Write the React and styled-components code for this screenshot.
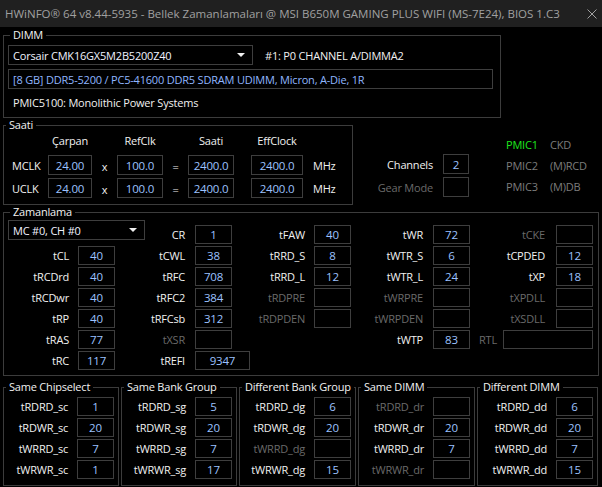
import React from 'react';
import styled, { createGlobalStyle } from 'styled-components';

const FONT = '"Open Sans", "Noto Sans", sans-serif';
const SIZE = '11px';
const TRACK = '-0.2px';

const GlobalStyle = createGlobalStyle`
  html, body {
    margin: 0;
    padding: 0;
    background: #000000;
  }
  body {
    font-family: ${FONT};
    font-size: ${SIZE};
    letter-spacing: ${TRACK};
    color: #eeeeee;
  }
`;

const Window = styled.div`
  width: 602px;
  height: 487px;
  overflow: hidden;
  background: #000000;
`;

const TitleBar = styled.div`
  display: flex;
  align-items: center;
  justify-content: space-between;
  height: 27px;
  padding: 0 5px;
  background: #202020;
  color: #a0a0a0;
  font-size: 11.5px;
  letter-spacing: 0;
  box-sizing: border-box;
`;

const Close = styled.svg`
  width: 10px;
  height: 10px;
`;

const Body = styled.div`
  display: flex;
  flex-direction: column;
  padding: 1px 4px 0 3px;
`;

const Group = styled.fieldset`
  margin: 0;
  padding: ${({ pad }) => pad || '2px 4px 4px 4px'};
  width: ${({ w }) => w}px;
  min-width: 0;
  box-sizing: border-box;
  border: 1px solid #3c3c3c;
  flex: none;
`;

const Legend = styled.legend`
  padding: 0 3px;
  margin-left: 2px;
  font-size: 11px;
  letter-spacing: -0.2px;
  line-height: 14px;
  color: #f2f2f2;
  white-space: nowrap;
`;

const Box = styled.div`
  width: ${({ w }) => w || 37}px;
  height: ${({ h }) => h || 19}px;
  box-sizing: border-box;
  border: 1px solid #3e3e3e;
  display: flex;
  align-items: center;
  justify-content: center;
  color: #9cc2ff;
  font-size: 11.5px;
  justify-self: start;
  align-self: end;
`;

const Combo = styled.div`
  display: flex;
  align-items: center;
  justify-content: space-between;
  width: ${({ w }) => w}px;
  height: 20px;
  box-sizing: border-box;
  border: 1px solid #3e3e3e;
  padding: 0 7px 0 4px;
  color: #f0f2ff;
  align-self: start;
  justify-self: start;
  grid-column: ${({ span }) => span || 'auto'};
`;

const Arrow = styled.span`
  width: 0;
  height: 0;
  border-left: 4px solid transparent;
  border-right: 4px solid transparent;
  border-top: 4px solid #f0f0f0;
`;

const Label = styled.div`
  text-align: right;
  padding-right: ${({ pr }) => (pr == null ? 9 : pr)}px;
  color: ${({ off }) => (off ? '#6a6a6a' : '#f0f0f0')};
  align-self: end;
  line-height: 19px;
  white-space: nowrap;
`;

/* DIMM */
const DimmRow = styled.div`
  display: flex;
  align-items: center;
  gap: 12px;
`;

const Slot = styled.span`
  color: #f0f0f0;
`;

const InfoBox = styled.div`
  margin-top: 4px;
  width: 485px;
  height: 20px;
  box-sizing: border-box;
  border: 1px solid #3e3e3e;
  padding-left: 4px;
  display: flex;
  align-items: center;
  color: #8fb6ff;
`;

const PlainLine = styled.div`
  height: 22px;
  margin-top: 2px;
  padding-left: 5px;
  display: flex;
  align-items: center;
  color: #f0f0f0;
`;

/* Saati */
const ClockRow = styled.div`
  display: flex;
  align-items: flex-start;
`;

const ClockGrid = styled.div`
  display: grid;
  grid-template-columns: 36px 44px 25px 46px 25px 46px 17px 52px auto;
  grid-template-rows: 20px 20px 20px;
  row-gap: 3px;
  padding-left: 8px;
  align-items: center;
  & > :nth-child(-n + 9) {
    margin-top: -3px;
  }
`;

const Head = styled.div`
  text-align: center;
  color: #f0f0f0;
`;

const RowName = styled.div`
  color: #f0f0f0;
`;

const Op = styled.div`
  text-align: center;
  color: #f0f0f0;
  padding-top: 3px;
`;

const Unit = styled.div`
  padding-left: 10px;
  color: #f0f0f0;
`;

const ChannelGrid = styled.div`
  display: grid;
  grid-template-columns: 90px 26px;
  grid-template-rows: 20px 20px;
  row-gap: 3px;
  margin-top: 36px;
  & > div {
    align-self: center;
  }
`;

const ChLabel = styled.div`
  text-align: right;
  padding-right: 10px;
  color: ${({ off }) => (off ? '#6a6a6a' : '#f0f0f0')};
`;

const ChBox = styled(Box)`
  width: 26px;
  height: 20px;
  align-self: center;
`;

const PmicGrid = styled.div`
  display: grid;
  grid-template-columns: 44px auto;
  grid-auto-rows: 21px;
  align-items: center;
  margin: 16px 0 0 37px;
`;

const Pmic = styled.div`
  color: ${({ on }) => (on ? '#1ee61e' : '#7c7c7c')};
`;

/* Zamanlama */
const TimingGrid = styled.div`
  display: grid;
  grid-template-columns: 70px 37px 80px 37px 82px 37px 82px 37px 86px 37px;
  grid-template-rows: 24px repeat(6, 19px);
  row-gap: 2px;
`;

const RtlCell = styled.div`
  grid-column: 9 / span 2;
  display: flex;
  align-items: flex-end;
  justify-content: space-between;
  padding-left: 9px;
`;

const RtlLabel = styled.span`
  color: #6a6a6a;
  line-height: 19px;
`;

/* Bottom */
const BottomRow = styled.div`
  display: flex;
  gap: 2px;
  margin-top: 4px;
`;

const PairGrid = styled.div`
  display: grid;
  grid-template-columns: 1fr 37px;
  grid-auto-rows: 19px;
  row-gap: 2px;
  padding-right: 2px;
  margin-top: 1px;
`;

const Cell = ({ label, value, off, w, pr }) => (
  <>
    <Label off={off} pr={pr}>{label}</Label>
    <Box w={w}>{value}</Box>
  </>
);

const Empty = () => <div />;

const columns = [
  ['combo', ['tCL', 40], ['tRCDrd', 40], ['tRCDwr', 40], ['tRP', 40], ['tRAS', 77], ['tRC', 117]],
  [['CR', 1], ['tCWL', 38], ['tRFC', 708], ['tRFC2', 384], ['tRFCsb', 312], ['tXSR', '', true], ['tREFI', 9347]],
  [['tFAW', 40], ['tRRD_S', 8], ['tRRD_L', 12], ['tRDPRE', '', true], ['tRDPDEN', '', true], null, 'skip'],
  [['tWR', 72], ['tWTR_S', 6], ['tWTR_L', 24], ['tWRPRE', '', true], ['tWRPDEN', '', true], ['tWTP', 83], null],
  [['tCKE', '', true], ['tCPDED', 12], ['tXP', 18], ['tXPDLL', '', true], ['tXSDLL', '', true], 'rtl', null],
];

const labelPad = [9, 10, 9, 10, 11];

const groups = [
  { title: 'Same Chipselect', w: 116, rows: [['tRDRD_sc', 1], ['tRDWR_sc', 20], ['tWRRD_sc', 7], ['tWRWR_sc', 1]] },
  { title: 'Same Bank Group', w: 116, rows: [['tRDRD_sg', 5], ['tRDWR_sg', 20], ['tWRRD_sg', 7], ['tWRWR_sg', 17]] },
  { title: 'Different Bank Group', w: 117, rows: [['tRDRD_dg', 6], ['tRDWR_dg', 20], ['tWRRD_dg', '', true], ['tWRWR_dg', 15]] },
  { title: 'Same DIMM', w: 117, rows: [['tRDRD_dr', '', true], ['tRDWR_dr', 20], ['tWRRD_dr', 7], ['tWRWR_dr', '', true]] },
  { title: 'Different DIMM', w: 121, rows: [['tRDRD_dd', 6], ['tRDWR_dd', 20], ['tWRRD_dd', 7], ['tWRWR_dd', 15]] },
];

function TimingCells() {
  const cells = [];
  for (let r = 0; r < 7; r += 1) {
    columns.forEach((col, c) => {
      const item = col[r];
      const key = `${r}-${c}`;
      if (item === 'skip') return; // tREFI box runs over this slot
      if (item === 'combo') {
        // combo is wider than its two tracks and runs under the CR label
        cells.push(
          <Combo key={key} w={137} span="1 / span 2">
            MC #0, CH #0
            <Arrow />
          </Combo>,
        );
        return;
      }
      if (item === 'rtl') {
        cells.push(
          <RtlCell key={key}>
            <RtlLabel>RTL</RtlLabel>
            <Box w={90} />
          </RtlCell>,
        );
        return;
      }
      if (!item) {
        cells.push(<React.Fragment key={key}><Empty /><Empty /></React.Fragment>);
        return;
      }
      if (item[0] === 'tREFI') {
        cells.push(
          <React.Fragment key={key}>
            <Label pr={labelPad[c]}>{item[0]}</Label>
            <Box w={55} style={{ gridColumn: '4 / span 2' }}>{item[1]}</Box>
          </React.Fragment>,
        );
        return;
      }
      cells.push(
        <Cell key={key} label={item[0]} value={item[1]} off={item[2]} pr={labelPad[c]} />,
      );
    });
  }
  return cells;
}

export default function App() {
  return (
    <Window>
      <GlobalStyle />
      <TitleBar>
        <span>HWiNFO® 64 v8.44-5935 - Bellek Zamanlamaları @ MSI B650M GAMING PLUS WIFI (MS-7E24), BIOS 1.C3</span>
        <Close viewBox="0 0 10 10">
          <path d="M0.5 0.5 L9.5 9.5 M9.5 0.5 L0.5 9.5" stroke="#a0a0a0" strokeWidth="1" />
        </Close>
      </TitleBar>
      <Body>
        <Group w={498} pad="3px 4px 4px 4px">
          <Legend>DIMM</Legend>
          <DimmRow>
            <Combo w={245}>
              Corsair CMK16GX5M2B5200Z40
              <Arrow />
            </Combo>
            <Slot>#1: P0 CHANNEL A/DIMMA2</Slot>
          </DimmRow>
          <InfoBox>[8 GB] DDR5-5200 / PC5-41600 DDR5 SDRAM UDIMM, Micron, A-Die, 1R</InfoBox>
          <PlainLine>PMIC5100: Monolithic Power Systems</PlainLine>
        </Group>

        <ClockRow>
          <Group w={350} pad="0 4px 6px 0">
            <Legend>Saati</Legend>
            <ClockGrid>
              <div />
              <Head>Çarpan</Head>
              <div />
              <Head>RefClk</Head>
              <div />
              <Head>Saati</Head>
              <div />
              <Head>EffClock</Head>
              <div />

              <RowName>MCLK</RowName>
              <Box w={44} h={20}>24.00</Box>
              <Op>x</Op>
              <Box w={46} h={20}>100.0</Box>
              <Op>=</Op>
              <Box w={46} h={20}>2400.0</Box>
              <div />
              <Box w={52} h={20}>2400.0</Box>
              <Unit>MHz</Unit>

              <RowName>UCLK</RowName>
              <Box w={44} h={20}>24.00</Box>
              <Op>x</Op>
              <Box w={46} h={20}>100.0</Box>
              <Op>=</Op>
              <Box w={46} h={20}>2400.0</Box>
              <div />
              <Box w={52} h={20}>2400.0</Box>
              <Unit>MHz</Unit>
            </ClockGrid>
          </Group>
          <ChannelGrid>
            <ChLabel>Channels</ChLabel>
            <ChBox>2</ChBox>
            <ChLabel off>Gear Mode</ChLabel>
            <ChBox />
          </ChannelGrid>
          <PmicGrid>
            <Pmic on>PMIC1</Pmic>
            <Pmic>CKD</Pmic>
            <Pmic>PMIC2</Pmic>
            <Pmic>(M)RCD</Pmic>
            <Pmic>PMIC3</Pmic>
            <Pmic>(M)DB</Pmic>
          </PmicGrid>
        </ClockRow>

        <Group w={596} pad="1px 4px 5px 4px">
          <Legend>Zamanlama</Legend>
          <TimingGrid>
            <TimingCells />
          </TimingGrid>
        </Group>

        <BottomRow>
          {groups.map((g) => (
            <Group key={g.title} w={g.w} pad="2px 2px 6px 0">
              <Legend>{g.title}</Legend>
              <PairGrid>
                {g.rows.map(([label, value, off]) => (
                  <Cell key={label} label={label} value={value} off={off} />
                ))}
              </PairGrid>
            </Group>
          ))}
        </BottomRow>
      </Body>
    </Window>
  );
}
